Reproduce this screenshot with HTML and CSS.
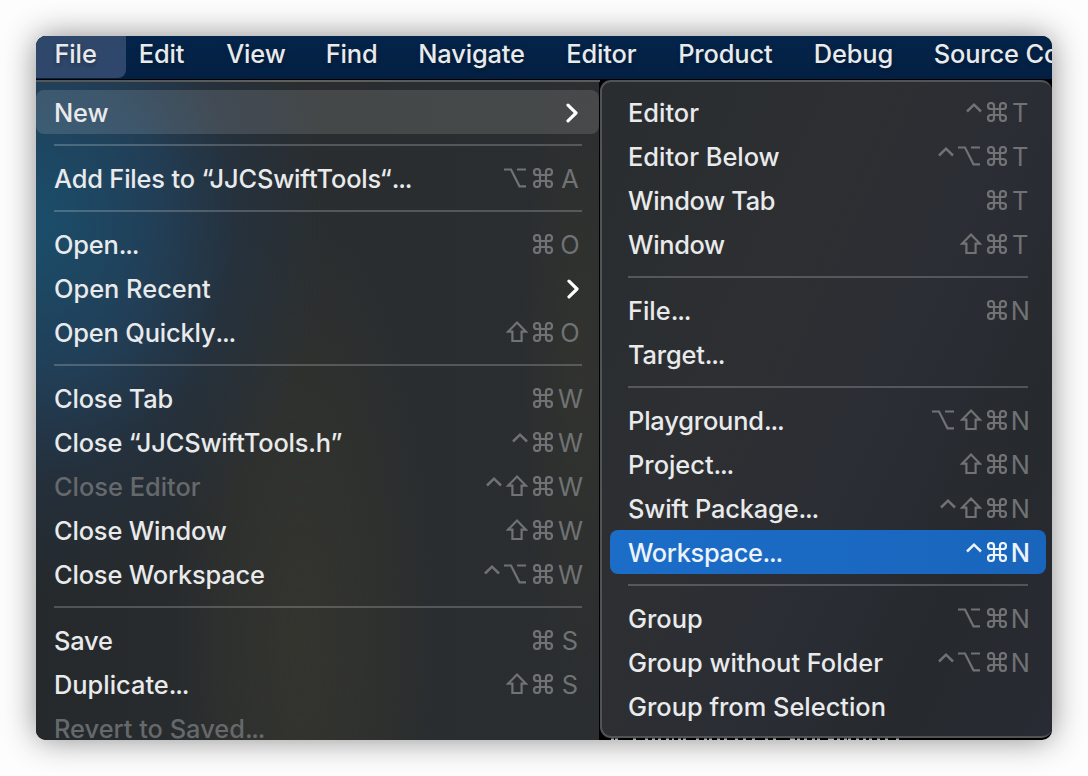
FILE: index.html
```html
<!DOCTYPE html>
<html lang="en">
<head>
<meta charset="utf-8">
<title>File menu</title>
<link rel="stylesheet" href="styles.css">
</head>
<body>
<svg class="defs" width="0" height="0">
  <symbol id="cmd" viewBox="0 0 20 20"><path d="M7 7H13V13H7ZM7 7V4A3 3 0 1 0 4 7ZM13 7H16A3 3 0 1 0 13 4ZM13 13V16A3 3 0 1 0 16 13ZM7 13H4A3 3 0 1 0 7 16Z"/></symbol>
  <symbol id="shift" viewBox="0 0 22 22"><path d="M11 1.6L20 10.7H15.6V20H6.4V10.7H2Z"/></symbol>
  <symbol id="opt" viewBox="0 0 22 20"><path d="M0 1.5H7L15.5 18.3H22M13 1.5H22"/></symbol>
  <symbol id="ctrl" viewBox="0 0 16 20"><path d="M1 9.5L8 2.7L15 9.5"/></symbol>
  <symbol id="chev" viewBox="0 0 12 20"><path d="M2 2.2L10 10L2 17.8"/></symbol>
</svg>
<div class="window">
  <nav class="menubar">
    <span class="tab active">File</span><span class="tab">Edit</span><span class="tab">View</span><span class="tab">Find</span><span class="tab">Navigate</span><span class="tab">Editor</span><span class="tab">Product</span><span class="tab">Debug</span><span class="tab">Source Control</span>
  </nav>
  <div class="menus">
    <div class="menu main">
      <div class="row open"><span class="tight">New</span><svg class="chev"><use href="#chev"/></svg></div>
      <hr>
      <div class="row"><span class="tight">Add Files to “JJCSwiftTools“<i>...</i></span><span class="keys"><svg class="opt"><use href="#opt"/></svg><svg class="cmd"><use href="#cmd"/></svg><b>A</b></span></div>
      <hr>
      <div class="row"><span class="tight">Open<i>...</i></span><span class="keys"><svg class="cmd"><use href="#cmd"/></svg><b>O</b></span></div>
      <div class="row"><span>Open Recent</span><svg class="chev"><use href="#chev"/></svg></div>
      <div class="row"><span class="tight">Open Quickly<i>...</i></span><span class="keys"><svg class="shift"><use href="#shift"/></svg><svg class="cmd"><use href="#cmd"/></svg><b>O</b></span></div>
      <hr>
      <div class="row"><span class="tight">Close Tab</span><span class="keys"><svg class="cmd"><use href="#cmd"/></svg><b>W</b></span></div>
      <div class="row"><span class="tight">Close “JJCSwiftTools.h”</span><span class="keys"><svg class="ctrl"><use href="#ctrl"/></svg><svg class="cmd"><use href="#cmd"/></svg><b>W</b></span></div>
      <div class="row off"><span>Close Editor</span><span class="keys"><svg class="ctrl"><use href="#ctrl"/></svg><svg class="shift"><use href="#shift"/></svg><svg class="cmd"><use href="#cmd"/></svg><b>W</b></span></div>
      <div class="row"><span class="tight">Close Window</span><span class="keys"><svg class="shift"><use href="#shift"/></svg><svg class="cmd"><use href="#cmd"/></svg><b>W</b></span></div>
      <div class="row"><span class="tight">Close Workspace</span><span class="keys"><svg class="ctrl"><use href="#ctrl"/></svg><svg class="opt"><use href="#opt"/></svg><svg class="cmd"><use href="#cmd"/></svg><b>W</b></span></div>
      <hr>
      <div class="row"><span class="tight">Save</span><span class="keys"><svg class="cmd"><use href="#cmd"/></svg><b>S</b></span></div>
      <div class="row"><span>Duplicate<i>...</i></span><span class="keys"><svg class="shift"><use href="#shift"/></svg><svg class="cmd"><use href="#cmd"/></svg><b>S</b></span></div>
      <div class="row off"><span>Revert to Saved<i>...</i></span></div>
    </div>
    <div class="side">
      <div class="menu sub">
        <div class="row"><span>Editor</span><span class="keys"><svg class="ctrl"><use href="#ctrl"/></svg><svg class="cmd"><use href="#cmd"/></svg><b>T</b></span></div>
        <div class="row"><span>Editor Below</span><span class="keys"><svg class="ctrl"><use href="#ctrl"/></svg><svg class="opt"><use href="#opt"/></svg><svg class="cmd"><use href="#cmd"/></svg><b>T</b></span></div>
        <div class="row"><span class="tighter">Window Tab</span><span class="keys"><svg class="cmd"><use href="#cmd"/></svg><b>T</b></span></div>
        <div class="row"><span class="tighter">Window</span><span class="keys"><svg class="shift"><use href="#shift"/></svg><svg class="cmd"><use href="#cmd"/></svg><b>T</b></span></div>
        <hr>
        <div class="row"><span>File<i>...</i></span><span class="keys"><svg class="cmd"><use href="#cmd"/></svg><b>N</b></span></div>
        <div class="row"><span class="tight">Target<i>...</i></span></div>
        <hr>
        <div class="row"><span class="tight">Playground<i>...</i></span><span class="keys"><svg class="opt"><use href="#opt"/></svg><svg class="shift"><use href="#shift"/></svg><svg class="cmd"><use href="#cmd"/></svg><b>N</b></span></div>
        <div class="row"><span>Project<i>...</i></span><span class="keys"><svg class="shift"><use href="#shift"/></svg><svg class="cmd"><use href="#cmd"/></svg><b>N</b></span></div>
        <div class="row"><span class="tight">Swift Package<i>...</i></span><span class="keys"><svg class="ctrl"><use href="#ctrl"/></svg><svg class="shift"><use href="#shift"/></svg><svg class="cmd"><use href="#cmd"/></svg><b>N</b></span></div>
        <div class="row selected"><span class="tighter">Workspace<i>...</i></span><span class="keys"><svg class="ctrl"><use href="#ctrl"/></svg><svg class="cmd"><use href="#cmd"/></svg><b>N</b></span></div>
        <hr>
        <div class="row"><span>Group</span><span class="keys"><svg class="opt"><use href="#opt"/></svg><svg class="cmd"><use href="#cmd"/></svg><b>N</b></span></div>
        <div class="row"><span>Group without Folder</span><span class="keys"><svg class="ctrl"><use href="#ctrl"/></svg><svg class="opt"><use href="#opt"/></svg><svg class="cmd"><use href="#cmd"/></svg><b>N</b></span></div>
        <div class="row"><span>Group from Selection</span></div>
      </div>
      <svg class="behind" viewBox="0 0 452 2"><path d="M11 1.2h3m1 0h3m15 0h3m9 0h3m4 0h3m3 0h3m5 0h3m3 0h2m4 0h3m2 0h3m10 0h3m5 0h3m2 0h3m5 0h3m4 0h3m8 0h3m5 0h3m6 0h3m10 0h3m5 0h3m14 0h5m2 0h3m4 0h3m5 0h3m2 0h3m8 0h6m3 0h3m4 0h3m1 0h3m5 0h3m4 0h3m3 0h3m5 0h3m5 0h3m8 0h3"/></svg>
    </div>
  </div>
</div>
</body>
</html>
```

FILE: styles.css
```css
* { box-sizing: border-box; }
body {
  margin: 0;
  width: 1088px;
  height: 776px;
  padding: 36px;
  overflow: hidden;
  background: #fdfdfd;
  font-family: Inter, "Liberation Sans", sans-serif;
  font-size: 25.4px;
  font-weight: 500;
  color: #e9eaeb;
}
.defs { position: absolute; }
svg { display: block; fill: none; stroke: currentColor; stroke-width: 2.2; }
i { font-style: normal; letter-spacing: -1.2px; }
.tight { letter-spacing: -.16px; }
.tighter { letter-spacing: -.33px; }
.window {
  display: flex;
  flex-direction: column;
  width: 1016px;
  height: 704px;
  overflow: hidden;
  border-radius: 10px;
  background: #000;
  box-shadow: 0 0 32px rgba(0, 0, 0, .45);
}
.menubar {
  display: grid;
  grid-template-columns: 90px 87.5px 99.5px 92.5px 148px 112px 135.5px 120px 200px;
  flex: none;
  height: 43px;
  background: linear-gradient(#05244b, #032042);
  letter-spacing: -.12px;
  white-space: nowrap;
}
.tab { height: 42px; padding-left: 12.7px; line-height: 36px; text-shadow: 0 2px 4px rgba(0, 0, 0, .3); }
.tab.active { padding-left: 18.5px; border-radius: 0 0 8px 0; background: #2f476b; }
.menus { display: flex; flex: 1; min-height: 0; }
.menu { padding-top: 8px; }
.main {
  width: 564px;
  margin-top: 1px;
  border-top: 2px solid rgba(255, 255, 255, .22);
  box-shadow: inset -1px 0 #000;
  background:
    radial-gradient(ellipse 290px 370px at 0 140px, rgba(24, 84, 118, .85), rgba(32, 70, 102, .75) 40%, rgba(34, 56, 80, .4) 70%, rgba(37, 50, 62, 0)),
    radial-gradient(ellipse 130px 440px at 265px 560px, rgba(54, 54, 46, .8), rgba(52, 52, 46, .55) 55%, rgba(48, 48, 44, 0)),
    radial-gradient(ellipse 60px 330px at 545px 290px, rgba(54, 54, 46, .6), rgba(50, 50, 44, 0)),
    linear-gradient(90deg, #25292c, #292d2f 45%, #2b2e30);
}
.side { width: 452px; }
.row {
  display: flex;
  align-items: center;
  justify-content: space-between;
  height: 44px;
  padding: 0 18px;
  white-space: nowrap;
}
.open { width: 563px; padding-right: 18px; border-radius: 8px; background: rgba(255, 255, 255, .13); }
hr { height: 2px; margin: 10px 18px; border: 0; background: rgba(255, 255, 255, .2); }
.off > span:first-child { color: #66696c; }
.keys { display: flex; align-items: center; gap: 5px; color: #707274; }
.keys b { width: 24px; font-weight: 400; text-align: center; }
.cmd { width: 20px; height: 20px; }
.shift { width: 22px; height: 22px; margin-left: -1px; }
.opt { width: 22px; height: 20px; margin: 0 2px 0 -1px; }
.ctrl { width: 16px; height: 20px; stroke-width: 2.5; }
.chev { width: 12px; height: 20px; margin: 1px 3.5px 0 0; stroke: #fff; stroke-width: 3.2; stroke-linecap: round; stroke-linejoin: round; }
.sub {
  height: 658px;
  margin-top: 1px;
  border: 2px solid #515457;
  border-right: 0;
  border-radius: 11px 11px 10px 11px;
  background: linear-gradient(115deg, #292d2f, #2d2f32 35%, #2a2d34 60%, #26292d 78%, #282b33);
}
.sub .row { padding: 0 24px 0 26px; }
.sub .keys b { display: flex; justify-content: center; width: 16px; letter-spacing: -.5px; }
.sub hr { margin: 10px 24px 10px 26px; }
.sub .row.selected { margin: 0 6px 0 8px; padding: 0 18px; border-radius: 8px; background: linear-gradient(90deg, #1b6dc8, #1965bc); }
.selected, .selected .keys { color: #edf3fb; }
.selected .keys b { font-weight: 500; }
.behind { width: 452px; height: 2px; stroke: #aeb0b2; stroke-width: 1.4; }
```
